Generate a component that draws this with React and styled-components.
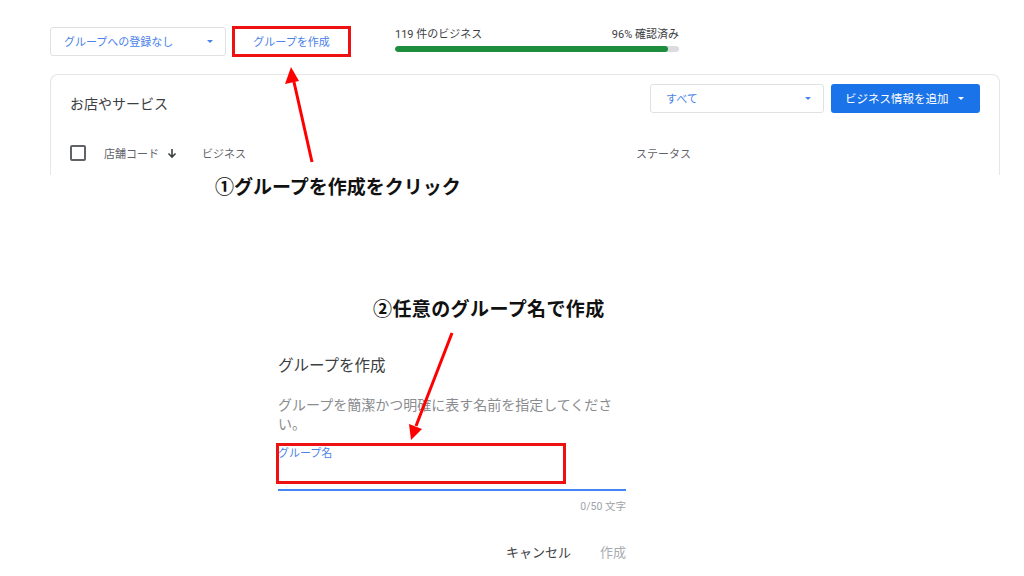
import React from "react";
import styled, { createGlobalStyle } from "styled-components";

const GlobalStyle = createGlobalStyle`
  body {
    margin: 0;
    background: #ffffff;
    font-family: Roboto, "Noto Sans CJK JP", sans-serif;
  }
`;

const Page = styled.div`
  position: relative;
  width: 1024px;
  height: 576px;
  overflow: hidden;
  background: #fff;
`;

const TopBar = styled.div`
  display: flex;
  align-items: center;
  padding: 26px 0 0 50px;
  height: 30px;
`;

const Select = styled.div`
  box-sizing: border-box;
  display: flex;
  align-items: center;
  justify-content: space-between;
  width: ${(p) => p.width}px;
  height: 29px;
  padding: 0 12px 0 ${(p) => p.padLeft || 13}px;
  border: 1px solid #dfe1e5;
  border-radius: 3px;
  color: #4a82e8;
  font-size: 11px;
`;

const Caret = styled.span`
  width: 0;
  height: 0;
  border-left: 3px solid transparent;
  border-right: 3px solid transparent;
  border-top: 3px solid ${(p) => p.color || "#4a82e8"};
`;

const CreateButton = styled.button`
  box-sizing: border-box;
  margin-left: 6px;
  width: 119px;
  height: 31px;
  border: 3px solid #ee1111;
  background: #fff;
  color: #4a82e8;
  font-family: inherit;
  font-size: 11px;
  padding: 0;
`;

const Progress = styled.div`
  margin-left: 44px;
  width: 284px;
  display: flex;
  flex-direction: column;
  gap: 4px;
  margin-top: -2px;
`;

const ProgressText = styled.div`
  display: flex;
  justify-content: space-between;
  font-size: 11px;
  color: #3c4043;
  line-height: 14px;
`;

const Track = styled.div`
  height: 6px;
  border-radius: 3px;
  background: #dadce0;
  overflow: hidden;
`;

const Fill = styled.div`
  height: 100%;
  border-radius: 3px;
  background: #1e8e3e;
`;

const Card = styled.div`
  box-sizing: border-box;
  margin: 18px 24px 0 50px;
  height: 101px;
  border: 1px solid #e6e6e6;
  border-bottom: none;
  border-radius: 8px 8px 0 0;
  padding: 8px 19px 0 19px;
`;

const CardHead = styled.div`
  display: flex;
  align-items: center;
  gap: 7px;
`;

const CardTitle = styled.div`
  flex: 1;
  font-size: 14px;
  color: #3c4043;
  padding-top: 10px;
`;

const AddButton = styled.button`
  display: flex;
  align-items: center;
  gap: 9px;
  height: 29px;
  width: 149px;
  padding: 0 0 0 14px;
  border: none;
  border-radius: 3px;
  background: #1a73e8;
  color: #fff;
  font-family: inherit;
  font-size: 11.5px;
`;

const HeadRow = styled.div`
  display: grid;
  grid-template-columns: 34px 98px 434px 1fr;
  align-items: center;
  margin-top: 32px;
  font-size: 11px;
  color: #5f6368;
`;

const Checkbox = styled.span`
  box-sizing: border-box;
  width: 16px;
  height: 16px;
  border: 2px solid #5f6368;
  border-radius: 2px;
`;

const Col = styled.span`
  display: flex;
  align-items: center;
  gap: 8px;
`;

const Caption = styled.div`
  padding-left: ${(p) => p.left}px;
  margin-top: ${(p) => p.top}px;
  font-family: "Noto Sans CJK JP", sans-serif;
  font-weight: 700;
  font-size: 19px;
  line-height: 22px;
  color: #111;
  letter-spacing: ${(p) => p.spacing || 0}px;
`;

const Dialog = styled.div`
  margin: 36px 0 0 278px;
  width: 348px;
`;

const DialogTitle = styled.div`
  font-size: 15.5px;
  line-height: 22px;
  color: #3c4043;
`;

const DialogDesc = styled.div`
  margin-top: 19px;
  font-size: 14px;
  line-height: 19px;
  color: #8a8c8f;
`;

const Field = styled.div`
  position: relative;
  box-sizing: border-box;
  margin-top: 9px;
  height: 48px;
  border-bottom: 2px solid #4285f4;
  padding-top: 4px;
`;

const FieldLabel = styled.div`
  font-size: 11px;
  line-height: 14px;
  color: #4a82e8;
`;

const Highlight = styled.div`
  position: absolute;
  left: -2px;
  top: 0;
  width: 290px;
  height: 41px;
  box-sizing: border-box;
  border: 3px solid #ee1111;
`;

const Counter = styled.div`
  margin-top: 9px;
  text-align: right;
  font-size: 10.5px;
  line-height: 14px;
  color: #a0a3a7;
`;

const Actions = styled.div`
  display: flex;
  justify-content: flex-end;
  gap: 29px;
  margin-top: 29px;
  font-size: 13px;
  line-height: 20px;
`;

const TextButton = styled.span`
  color: ${(p) => (p.disabled ? "#a8abaf" : "#3c4043")};
`;

const Overlay = styled.svg`
  position: absolute;
  left: 0;
  top: 0;
  pointer-events: none;
`;

export default function App() {
  return (
    <Page>
      <GlobalStyle />
      <TopBar>
        <Select width={176}>
          グループへの登録なし
          <Caret />
        </Select>
        <CreateButton>グループを作成</CreateButton>
        <Progress>
          <ProgressText>
            <span>119 件のビジネス</span>
            <span>96% 確認済み</span>
          </ProgressText>
          <Track>
            <Fill style={{ width: "96%" }} />
          </Track>
        </Progress>
      </TopBar>

      <Card>
        <CardHead>
          <CardTitle>お店やサービス</CardTitle>
          <Select width={174} padLeft={15}>
            すべて
            <Caret />
          </Select>
          <AddButton>
            ビジネス情報を追加
            <Caret color="#fff" />
          </AddButton>
        </CardHead>
        <HeadRow>
          <Checkbox />
          <Col>
            店舗コード
            <svg width="10" height="11" viewBox="0 0 10 11">
              <path d="M5 1v8M1.5 5.5L5 9l3.5-3.5" stroke="#3c4043" strokeWidth="1.6" fill="none" />
            </svg>
          </Col>
          <Col>ビジネス</Col>
          <Col>ステータス</Col>
        </HeadRow>
      </Card>

      <Caption left={215} top={0}>①グループを作成をクリック</Caption>
      <Caption left={373} top={100} spacing={0.4}>②任意のグループ名で作成</Caption>

      <Dialog>
        <DialogTitle>グループを作成</DialogTitle>
        <DialogDesc>グループを簡潔かつ明確に表す名前を指定してください。</DialogDesc>
        <Field>
          <FieldLabel>グループ名</FieldLabel>
          <Highlight />
        </Field>
        <Counter>0/50 文字</Counter>
        <Actions>
          <TextButton>キャンセル</TextButton>
          <TextButton disabled>作成</TextButton>
        </Actions>
      </Dialog>

      <Overlay width="1024" height="576">
        <line x1="312" y1="162" x2="294" y2="82" stroke="#ff0000" strokeWidth="3" />
        <polygon points="291,67 285,84 299,81" fill="#ff0000" />
        <line x1="452" y1="333" x2="416" y2="426" stroke="#ff0000" strokeWidth="3" />
        <polygon points="411,440 409,424 422,429" fill="#ff0000" />
      </Overlay>
    </Page>
  );
}
